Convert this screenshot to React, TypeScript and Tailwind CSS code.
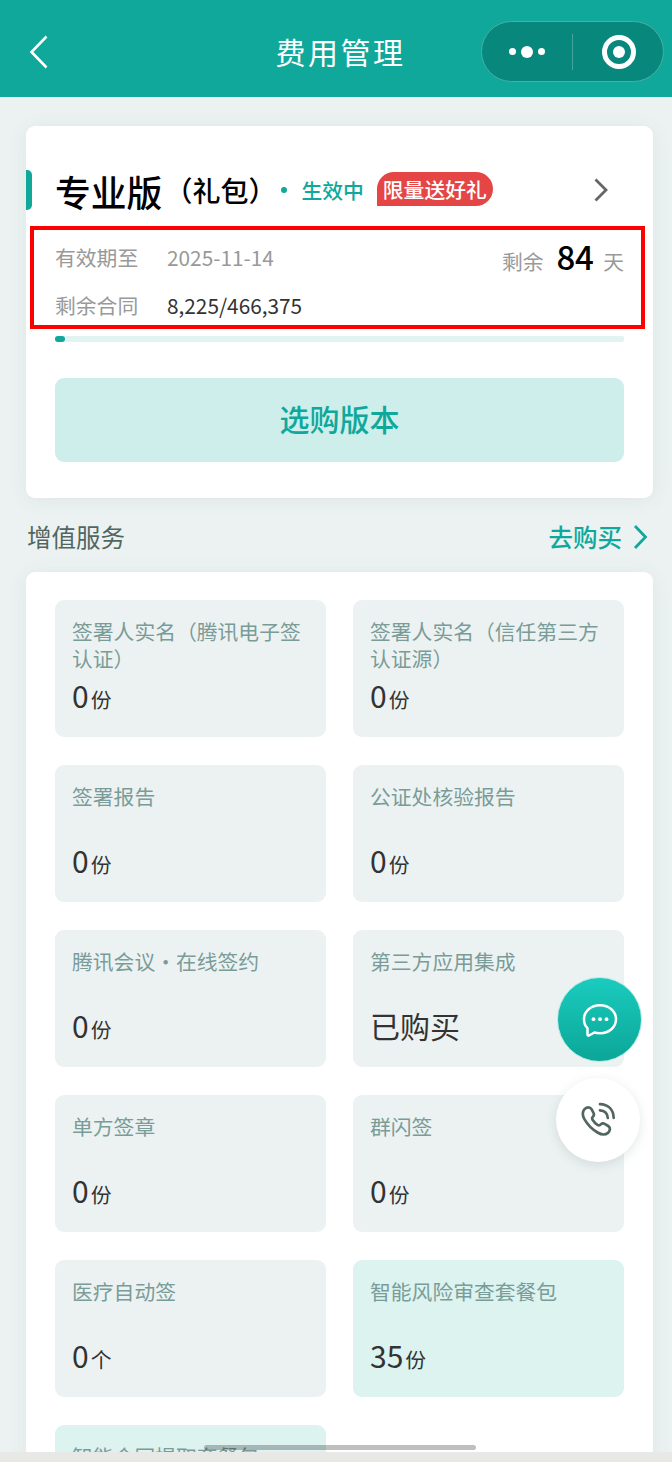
const SERVICES = [
  { name: '签署人实名（腾讯电子签认证）', value: '0', unit: '份' },
  { name: '签署人实名（信任第三方认证源）', value: '0', unit: '份' },
  { name: '签署报告', value: '0', unit: '份' },
  { name: '公证处核验报告', value: '0', unit: '份' },
  { name: '腾讯会议・在线签约', value: '0', unit: '份' },
  { name: '第三方应用集成', value: '已购买', unit: '' },
  { name: '单方签章', value: '0', unit: '份' },
  { name: '群闪签', value: '0', unit: '份' },
  { name: '医疗自动签', value: '0', unit: '个' },
  { name: '智能风险审查套餐包', value: '35', unit: '份', active: true },
  { name: '智能合同提取套餐包', value: '0', unit: '份', active: true },
];

function Header() {
  return (
    <header className="relative flex h-[97px] shrink-0 items-center justify-between bg-[#10a89b] pt-[6px] pr-[8px] pl-[29px]">
      <svg width="20" height="34" viewBox="0 0 20 34" fill="none" stroke="#fff" strokeWidth="2.6">
        <path d="M17.5 1.5 2.5 17l15 15.5" />
      </svg>
      <h1 className="absolute inset-x-0 top-[29px] pl-[9px] text-center text-[30px] leading-[44px] tracking-[2.5px] text-white">
        费用管理
      </h1>
      <div className="relative flex h-[61px] w-[183px] items-center rounded-full border border-[#45b0a7] bg-[#08877d]">
        <div className="flex w-[90px] items-center justify-center gap-[5px]">
          <span className="size-[7px] rounded-full bg-white" />
          <span className="size-[12px] rounded-full bg-white" />
          <span className="size-[7px] rounded-full bg-white" />
        </div>
        <span className="h-[36px] w-px bg-[#45a59d]" />
        <div className="flex flex-1 items-center justify-center pl-[2px]">
          <span className="flex size-[34px] items-center justify-center rounded-full border-[5px] border-white">
            <span className="size-[12px] rounded-full bg-white" />
          </span>
        </div>
      </div>
    </header>
  );
}

function PlanCard() {
  return (
    <section className="relative h-[371.5px] rounded-[9px] bg-white pr-[29px] pl-[29px] pt-[44px] shadow-[0_2px_20px_rgba(60,90,85,0.08)]">
      <span className="absolute top-[44px] left-0 h-[40px] w-[6px] rounded-r-[5px] bg-[#10a89b]" />
      <div className="flex h-[40px] items-center">
        <h2 className="flex items-center font-medium text-black">
          <span className="pt-px text-[35.8px] leading-[40px]">专业版</span>
          <span className="ml-[2px] text-[28px] leading-[40px]">（礼包）</span>
        </h2>
        <span className="ml-[5px] size-[6px] rounded-full bg-[#10a89b]" />
        <span className="ml-[14px] text-[20.8px] font-medium leading-[40px] text-[#10a89b]">生效中</span>
        <span className="mb-[2px] ml-[13px] flex h-[34px] w-[116px] items-center justify-center rounded-[17px] rounded-bl-none bg-[#e64545] pt-px text-[20.8px] font-medium text-white">
          限量送好礼
        </span>
        <svg className="ml-auto mr-[15px]" width="16" height="24" viewBox="0 0 16 24" fill="none" stroke="#666" strokeWidth="2.8">
          <path d="M2.5 1.5 13 12 2.5 22.5" />
        </svg>
      </div>

      <div className="mt-[23px] flex justify-between text-[20.8px] text-[#999]">
        <div className="flex flex-col">
          <div className="flex h-[48px]">
            <span className="w-[112px] leading-[48px]">有效期至</span>
            <span className="leading-[48px]">2025-11-14</span>
          </div>
          <div className="flex h-[48px]">
            <span className="w-[112px] leading-[48px]">剩余合同</span>
            <span className="leading-[48px] text-[#333]">8,225/466,375</span>
          </div>
        </div>
        <div className="flex h-[48px] items-baseline">
          <span className="leading-[48px]">剩余</span>
          <span className="mr-[10px] ml-[13px] text-[33px] font-medium leading-[47px] tracking-[-0.5px] text-black">84</span>
          <span className="leading-[48px]">天</span>
        </div>
      </div>

      <div className="mt-[7px] h-[6px] rounded-[2px] bg-[#e1f4f2]">
        <div className="h-full w-[10px] rounded-[3px] bg-[#10a89b]" />
      </div>

      <button className="mt-[36px] h-[83.5px] w-full rounded-[9px] bg-[#cdeeea] pb-[3px] text-[30px] font-medium text-[#10a89b]">
        选购版本
      </button>

      {/* Highlighted validity area */}
      <div className="absolute top-[100px] left-[4px] h-[103px] w-[615px] border-4 border-[#ff0000]" />
    </section>
  );
}

function FloatingActions() {
  return (
    <div className="absolute top-[977px] left-[556px] flex flex-col gap-[16px]">
      <button className="ml-px flex size-[85px] items-center justify-center rounded-full border border-[#b5ebe5] bg-gradient-to-b from-[#1accbe] to-[#0ba698]">
        <svg width="38" height="38" viewBox="0 0 38 38" fill="none">
          <path
            d="M19 4.2c9 0 16 6 16 14s-7 14-16 14c-2 0-3.900-.2-5.600-.7L8 34.500c-.8.400-1.500 0-1.500-.9v-6.400C4.200 25 3 21.800 3 18.200c0-8 7-14 16-14Z"
            stroke="#fff"
            strokeWidth="2.5"
            strokeLinejoin="round"
          />
          <circle cx="12.5" cy="18.2" r="1.9" fill="#fff" />
          <circle cx="19" cy="18.2" r="1.9" fill="#fff" />
          <circle cx="25.5" cy="18.2" r="1.9" fill="#fff" />
        </svg>
      </button>
      <button className="flex size-[84px] items-center justify-center rounded-full bg-white shadow-[0_3px_12px_rgba(60,90,85,0.14)]">
        <svg
          width="36"
          height="36"
          viewBox="0 0 36 36"
          fill="none"
          stroke="#526660"
          strokeWidth="2.7"
          strokeLinecap="round"
          strokeLinejoin="round"
        >
          <path d="M4.2 7.5c2.200-2.800 5.800-2.900 7.300-.3l2 3.600c.8 1.500.5 2.700-.6 3.900-1 1-1 2-.2 3.200 1.300 2 2.900 3.600 4.800 4.900 1.300.8 2.200.7 3.300-.4 1.200-1.200 2.500-1.300 3.900-.5l3.500 2.100c2.400 1.500 2.200 4.700-.3 6.900-2.500 2.100-6.200 2.100-10.400-.4C12.600 27.700 7.500 22.600 4.400 17.200c-2-3.700-2.200-7-.2-9.700Z" />
          <path d="M20 8.300c4.600.2 7.600 3.200 7.800 7.700" />
          <path d="M20 2.200c8.200.3 13.300 5.500 13.700 13.600" />
        </svg>
      </button>
    </div>
  );
}

export default function App() {
  return (
    <div className="relative flex h-[1462px] w-[672px] flex-col overflow-hidden bg-[#ecf2f2] font-['Noto_Sans_CJK_SC',sans-serif]">
      <Header />

      <main className="min-h-0 flex-1 overflow-hidden pt-[29px] pr-[19px] pl-[26px]">
        <PlanCard />

        <div className="flex h-[74px] items-center justify-between pt-[4px] pr-[5px] pl-px text-[24.5px]">
          <h3 className="pt-[2px] text-[#526660]">增值服务</h3>
          <a className="flex items-center gap-[11px] font-medium text-[#10a89b]">
            <span className="pt-[2px]">去购买</span>
            <svg width="15" height="26" viewBox="0 0 15 26" fill="none" stroke="currentColor" strokeWidth="2.8">
              <path d="M2 2l10.500 11L2 24" />
            </svg>
          </a>
        </div>

        <section className="grid h-[960px] grid-cols-2 content-start gap-x-[27px] gap-y-[28px] rounded-[9px] bg-white px-[29px] pt-[28.5px] shadow-[0_2px_20px_rgba(60,90,85,0.08)]">
          {SERVICES.map((item) => (
            <div
              key={item.name}
              className={`h-[137px] rounded-[9px] px-[17px] pt-[18px] ${item.active ? 'bg-[#dcf3f0]' : 'bg-[#ecf2f2]'}`}
            >
              <p className="h-[53px] text-[20.8px] leading-[26.5px] text-[#7a9c98]">{item.name}</p>
              <p className="mt-[4px] flex items-baseline gap-[2px] text-[#333]">
                <span className="text-[30px] leading-[40px]">{item.value}</span>
                <span className="text-[20.8px] leading-[26px]">{item.unit}</span>
              </p>
            </div>
          ))}
        </section>
      </main>

      <footer className="h-[10px] shrink-0 bg-[#e8e8e6]" />

      <FloatingActions />
      {/* Home indicator */}
      <div className="absolute bottom-[12px] left-[204px] h-[5px] w-[272px] rounded-full bg-black/25" />
    </div>
  );
}
